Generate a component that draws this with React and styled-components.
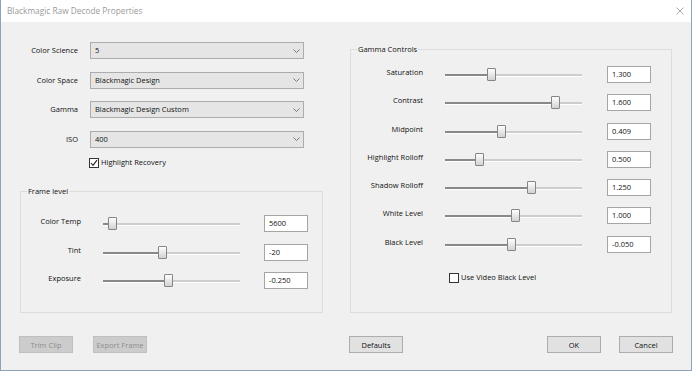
import React from "react";
import styled, { createGlobalStyle } from "styled-components";

const fields = [
  { label: "Color Science", value: "5" },
  { label: "Color Space", value: "Blackmagic Design" },
  { label: "Gamma", value: "Blackmagic Design Custom" },
  { label: "ISO", value: "400" },
];

// pos = thumb offset from track start, in px
const frameSliders = [
  { label: "Color Temp", value: "5600", pos: 5 },
  { label: "Tint", value: "-20", pos: 55 },
  { label: "Exposure", value: "-0.250", pos: 61 },
];

const gammaSliders = [
  { label: "Saturation", value: "1.300", pos: 42 },
  { label: "Contrast", value: "1.600", pos: 106 },
  { label: "Midpoint", value: "0.409", pos: 52 },
  { label: "Highlight Rolloff", value: "0.500", pos: 30 },
  { label: "Shadow Rolloff", value: "1.250", pos: 82 },
  { label: "White Level", value: "1.000", pos: 66 },
  { label: "Black Level", value: "-0.050", pos: 62 },
];

const Chevron = () => (
  <svg width="7" height="4" viewBox="0 0 7 4">
    <polyline points="0.5,0.5 3.5,3.5 6.5,0.5" fill="none" stroke="#7a7a7a" strokeWidth="1" />
  </svg>
);

const CloseIcon = () => (
  <svg width="8" height="8" viewBox="0 0 8 8">
    <path d="M0.5 0.5 L7.5 7.5 M7.5 0.5 L0.5 7.5" stroke="#a8a8a8" strokeWidth="1" />
  </svg>
);

const CheckMark = () => (
  <svg width="8" height="8" viewBox="0 0 8 8">
    <polyline points="1,4 3,6.3 7,1.2" fill="none" stroke="#222" strokeWidth="1.1" />
  </svg>
);

const Slider = ({ pos }) => (
  <SliderWrap>
    <Track $fill={pos + 4} />
    <Thumb style={{ left: pos }} />
  </SliderWrap>
);

const SliderRows = ({ rows, cols, gap, top }) => (
  <SliderGrid $cols={cols} $gap={gap} $top={top}>
    {rows.map((r) => (
      <React.Fragment key={r.label}>
        <RowLabel>{r.label}</RowLabel>
        <Slider pos={r.pos} />
        <ValueBox>{r.value}</ValueBox>
      </React.Fragment>
    ))}
  </SliderGrid>
);

const App = () => {
  return (
    <>
      <GlobalStyle />
      <Window>
        <TitleBar>
          <Title>Blackmagic Raw Decode Properties</Title>
          <CloseIcon />
        </TitleBar>
        <Body>
          <Column>
            <Fields>
              {fields.map((f) => (
                <React.Fragment key={f.label}>
                  <FieldLabel>{f.label}</FieldLabel>
                  <Select>
                    <span>{f.value}</span>
                    <Chevron />
                  </Select>
                </React.Fragment>
              ))}
            </Fields>
            <CheckRow $top={10} $left={69}>
              <Box>
                <CheckMark />
              </Box>
              <span>Highlight Recovery</span>
            </CheckRow>
            <Group $top={23.5}>
              <Caption>Frame level</Caption>
              <SliderRows rows={frameSliders} cols="60px 137px 46px" gap={11.5} top={23} />
            </Group>
          </Column>
          <Column>
            <Group $top={7}>
              <Caption>Gamma Controls</Caption>
              <SliderRows rows={gammaSliders} cols="72px 137px 47px" gap={11.25} top={16} />
              <CheckRow $top={20} $left={98}>
                <Box />
                <span>Use Video Black Level</span>
              </CheckRow>
            </Group>
          </Column>
        </Body>
        <Footer>
          <ButtonGroup>
            <Button disabled>Trim Clip</Button>
            <Button disabled>Export Frame</Button>
          </ButtonGroup>
          <DefaultsButton>Defaults</DefaultsButton>
          <ButtonGroup $right>
            <Button>OK</Button>
            <Button>Cancel</Button>
          </ButtonGroup>
        </Footer>
      </Window>
    </>
  );
};

export default App;

const GlobalStyle = createGlobalStyle`
  html, body {
    margin: 0;
    padding: 0;
    background: #f0f0f0;
  }
  body {
    font-family: "Open Sans", "Noto Sans", sans-serif;
  }
  * {
    box-sizing: border-box;
  }
`;

const Window = styled.div`
  width: 692px;
  height: 371px;
  display: flex;
  flex-direction: column;
  background: #f0f0f0;
  border: 1px solid #8fa3b8;
  border-top: none;
  font-size: 7.5px;
  line-height: 1.2;
  color: #111;
`;

const TitleBar = styled.div`
  height: 22px;
  flex-shrink: 0;
  display: flex;
  align-items: center;
  justify-content: space-between;
  padding: 0 7px 0 6px;
  background: #fff;
`;

const Title = styled.span`
  font-size: 8.3px;
  color: #9a9a9a;
`;

const Body = styled.div`
  display: grid;
  grid-template-columns: 303px 322px;
  grid-template-rows: 271px;
  column-gap: 27px;
  padding: 20px 18px 0 19px;
`;

const Column = styled.div`
  display: flex;
  flex-direction: column;
`;

const Fields = styled.div`
  display: grid;
  grid-template-columns: 58px 214px;
  column-gap: 12px;
  row-gap: 12.5px;
  align-items: center;
`;

const FieldLabel = styled.div`
  text-align: right;
  white-space: nowrap;
`;

const Select = styled.div`
  height: 17px;
  display: flex;
  align-items: center;
  justify-content: space-between;
  padding: 0 3px 0 4px;
  background: #e5e5e5;
  border: 1px solid #acacac;
`;

const CheckRow = styled.div`
  display: flex;
  align-items: center;
  gap: 2px;
  height: 10px;
  margin: ${(p) => p.$top}px 0 0 ${(p) => p.$left}px;
  white-space: nowrap;
`;

const Box = styled.div`
  width: 10px;
  height: 10px;
  display: flex;
  align-items: center;
  justify-content: center;
  background: #fff;
  border: 1px solid #333;
`;

const Group = styled.div`
  position: relative;
  flex: 1;
  margin-top: ${(p) => p.$top}px;
  border: 1px solid #dcdcdc;
`;

const Caption = styled.span`
  position: absolute;
  top: -6px;
  left: 6px;
  padding: 0 1px;
  line-height: 10px;
  background: #f0f0f0;
`;

const SliderGrid = styled.div`
  display: grid;
  grid-template-columns: ${(p) => p.$cols};
  column-gap: 22px;
  row-gap: ${(p) => p.$gap}px;
  padding-top: ${(p) => p.$top}px;
`;

const RowLabel = styled.div`
  text-align: right;
  white-space: nowrap;
  line-height: 10px;
  padding-top: 1px;
`;

const SliderWrap = styled.div`
  position: relative;
  height: 17px;
  display: flex;
  align-items: center;
`;

const Track = styled.div`
  width: 100%;
  height: 2px;
  margin-top: 1px;
  background: linear-gradient(
    to right,
    #888 0,
    #888 ${(p) => p.$fill}px,
    #cdcdcd ${(p) => p.$fill}px,
    #cdcdcd 100%
  );
  box-shadow: 0 1px 0 #fff;
`;

const Thumb = styled.div`
  position: absolute;
  top: 2px;
  width: 9px;
  height: 13px;
  border: 1px solid #858585;
  border-radius: 1px;
  background: linear-gradient(#fefefe, #d2d2d2);
`;

const ValueBox = styled.div`
  justify-self: end;
  width: 44px;
  height: 17px;
  display: flex;
  align-items: center;
  padding-left: 4px;
  background: #fff;
  border: 1px solid #a5a5a5;
`;

const Footer = styled.div`
  display: flex;
  align-items: center;
  padding: 23px 18px 0 18px;
`;

const ButtonGroup = styled.div`
  display: flex;
  gap: ${(p) => (p.$right ? 18 : 20)}px;
  margin-left: ${(p) => (p.$right ? "auto" : "0")};
`;

const Button = styled.button`
  width: 54px;
  height: 17px;
  padding: 0;
  font-family: inherit;
  font-size: 7.5px;
  color: #111;
  background: #e1e1e1;
  border: 1px solid #adadad;
  border-radius: 0;

  &:disabled {
    color: #8c8c8c;
    background: #cccccc;
    border-color: #bfbfbf;
  }
`;

const DefaultsButton = styled(Button)`
  margin-left: 202px;
`;
